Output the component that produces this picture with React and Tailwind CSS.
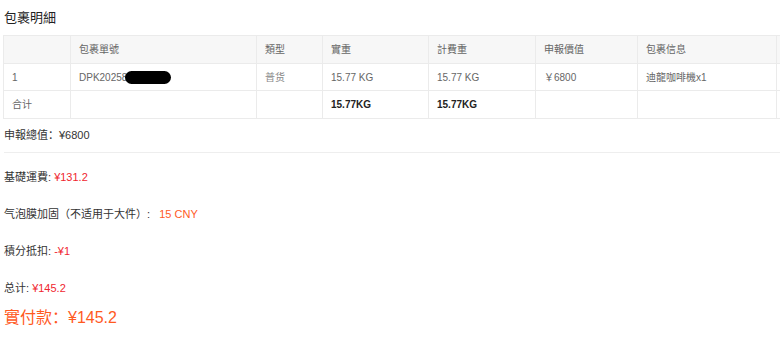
import React from "react";

const cols = [67, 186, 66, 106, 107, 102, 139, 120];

export default function App() {
  const th = "border border-[#ebebeb] bg-[#f7f7f7] px-[8px] text-left font-normal text-[#666] h-[28px]";
  const td = "border border-[#ebebeb] px-[8px] text-left text-[#666] h-[27px]";
  return (
    <div
      className="w-[780px] h-[342px] overflow-hidden bg-white text-[#333]"
      style={{ fontFamily: '"Liberation Sans", "Noto Sans CJK SC", sans-serif' }}
    >
      <div className="h-[35px] flex items-center pl-[4px] text-[13px] text-[#222]">包裹明細</div>
      <div className="pl-[3px] overflow-hidden">
        <table className="table-fixed border-collapse text-[10px]" style={{ width: cols.reduce((a, b) => a + b, 0) }}>
          <colgroup>
            {cols.map((w, i) => (
              <col key={i} style={{ width: w }} />
            ))}
          </colgroup>
          <thead>
            <tr>
              <th className={th}></th>
              <th className={th}>包裹單號</th>
              <th className={th}>類型</th>
              <th className={th}>實重</th>
              <th className={th}>計費重</th>
              <th className={th}>申報價值</th>
              <th className={th}>包裹信息</th>
              <th className={th}></th>
            </tr>
          </thead>
          <tbody>
            <tr>
              <td className={td}>1</td>
              <td className={td}>
                <span className="inline-flex items-center">
                  DPK20258
                  <span className="inline-block w-[46px] h-[13px] bg-black rounded-full -ml-[2px]"></span>
                </span>
              </td>
              <td className={td + " !text-[#888]"}>普货</td>
              <td className={td}>15.77 KG</td>
              <td className={td}>15.77 KG</td>
              <td className={td}>￥6800</td>
              <td className={td}>迪龍咖啡機x1</td>
              <td className={td}></td>
            </tr>
            <tr>
              <td className={td + " h-[28px]"}>合计</td>
              <td className={td}></td>
              <td className={td}></td>
              <td className={td + " font-bold !text-[#222]"}>15.77KG</td>
              <td className={td + " font-bold !text-[#222]"}>15.77KG</td>
              <td className={td}></td>
              <td className={td}></td>
              <td className={td}></td>
            </tr>
          </tbody>
        </table>
      </div>
      <div className="text-[11px] pl-[4px]">
        <div className="h-[34px] flex items-center border-b border-[#eeeeee]">申報總值：¥6800</div>
        <div className="pt-[6px]">
          <div className="h-[37px] flex items-center">
            基礎運費:&nbsp;<span className="text-[#f0262f]">¥131.2</span>
          </div>
          <div className="h-[37px] flex items-center">
            气泡膜加固（不适用于大件）:&nbsp;&nbsp;&nbsp;<span className="text-[#ff5a1f]">15 CNY</span>
          </div>
          <div className="h-[37px] flex items-center">
            積分抵扣:&nbsp;<span className="text-[#f0262f]">-¥1</span>
          </div>
          <div className="h-[36px] flex items-center">
            总计:&nbsp;<span className="text-[#f0262f]">¥145.2</span>
          </div>
          <div className="h-[24px] flex items-center text-[16px] text-[#ff5a1f]">實付款：¥145.2</div>
        </div>
      </div>
    </div>
  );
}
